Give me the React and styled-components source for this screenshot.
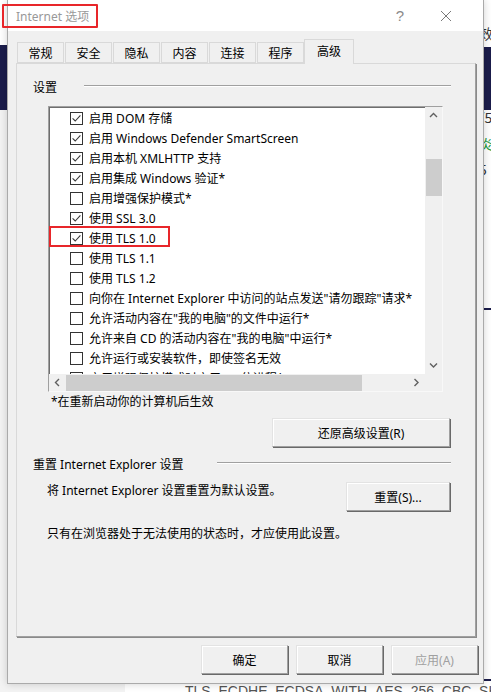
import React from 'react'
import styled, { createGlobalStyle } from 'styled-components'

const GlobalStyle = createGlobalStyle`
  body {
    margin: 0;
    font-family: 'Noto Sans', 'Noto Sans CJK SC', sans-serif;
    font-size: 12px;
    color: #000;
  }
`

const Desktop = styled.div`
  width: 491px;
  height: 692px;
  overflow: hidden;
  display: flex;
  flex-direction: column;
  padding-left: 7px;
  box-sizing: border-box;
  background:
    linear-gradient(#1b1c4b, #1b1c4b) 0 45px / 7px 65px no-repeat,
    linear-gradient(#1b1c4b, #1b1c4b) 484px 47px / 7px 63px no-repeat,
    linear-gradient(#1b1c4b, #1b1c4b) 484px 308px / 7px 2px no-repeat,
    linear-gradient(#1b1c4b, #1b1c4b) 484px 679px / 7px 2px no-repeat,
    linear-gradient(#f3f3f3, #f3f3f3) 0 110px / 125px 100% no-repeat,
    #fff;
`

const Top = styled.div`
  display: flex;
`

const SidePeek = styled.div`
  width: 12px;
  margin-left: -5px;
  display: flex;
  flex-direction: column;
  font-family: 'Noto Sans CJK SC', sans-serif;
  font-size: 14px;
  line-height: 26px;
  color: #333;
  white-space: nowrap;
  padding-top: 20px;
`

const PeekText = styled.div`
  margin-top: ${p => p.$gap || 0}px;
  color: ${p => p.$color || '#333'};
`

const Window = styled.div`
  position: relative;
  z-index: 1;
  width: 477px;
  height: 684px;
  flex-shrink: 0;
  box-sizing: border-box;
  border: 1px solid #aaaaaa;
  border-top: none;
  background: #f0f0f0;
  display: flex;
  flex-direction: column;
  box-shadow: 0 0 8px rgba(0, 0, 0, 0.18);
`

const TitleBar = styled.div`
  position: relative;
  height: 31px;
  background: #fff;
  display: flex;
  align-items: center;
  padding-left: 8px;
  padding-right: 14px;
`

const Title = styled.span`
  flex: 1;
  color: #999;
  font-size: 12px;
`

const Mark = styled.div`
  position: absolute;
  left: -6px;
  top: 4px;
  width: 96px;
  height: 24px;
  border: 2px solid #e8262a;
  box-sizing: border-box;
  border-radius: 1px;
`

const TitleButton = styled.span`
  width: 46px;
  display: flex;
  justify-content: center;
  color: #8a8a8a;
  font-size: 15px;
  font-family: 'Liberation Sans', sans-serif;
`

const Body = styled.div`
  flex: 1;
  display: flex;
  flex-direction: column;
  padding: 9px 7px 9px 8px;
`

const TabRow = styled.div`
  position: relative;
  z-index: 1;
  height: 24px;
  margin-bottom: -1px;
  padding-left: 1px;
  display: flex;
  align-items: flex-end;
`

const Tab = styled.div`
  box-sizing: border-box;
  width: ${p => (p.$active ? 50 : 47)}px;
  height: ${p => (p.$active ? 25 : 21)}px;
  margin: ${p => (p.$active ? '0 0 0 -1px' : '0 1px 1px 0')};
  border: 1px solid #d9d9d9;
  border-bottom: ${p => (p.$active ? 'none' : '1px solid #d9d9d9')};
  background: #f0f0f0;
  display: flex;
  justify-content: center;
  align-items: center;
  padding-bottom: ${p => (p.$active ? 3 : 0)}px;
`

const Panel = styled.div`
  flex: 1;
  display: flex;
  flex-direction: column;
  border: 1px solid #d9d9d9;
  border-right-color: #a0a0a0;
  border-bottom-color: #a0a0a0;
  box-shadow: 1px 1px 0 #8a8a8a;
  padding-top: 14px;
`

const GroupHeader = styled.div`
  height: 18px;
  display: flex;
  align-items: center;
  gap: ${p => p.$gap}px;
  padding: 0 24px 0 16px;
  margin-top: ${p => p.$top || 0}px;
`

const GroupLine = styled.div`
  flex: 1;
  border-top: 1px solid #a0a0a0;
  border-bottom: 1px solid #fff;
  margin-top: -2px;
`

const ListBox = styled.div`
  margin: 10px 32px 0 31px;
  height: 286px;
  box-sizing: border-box;
  border: 1px solid;
  border-color: #a0a0a0 #f8f8f8 #f8f8f8 #a0a0a0;
  box-shadow: inset 1px 1px 0 #6e6e6e;
  background: #fff;
  display: grid;
  grid-template-columns: 1fr 17px;
  grid-template-rows: 1fr 17px;
  overflow: hidden;
`

const ListContent = styled.div`
  overflow: hidden;
  padding-left: 21px;
  padding-top: 1px;
`

const Item = styled.div`
  position: relative;
  height: 20px;
  display: flex;
  align-items: center;
  gap: 6px;
  white-space: nowrap;
`

const ItemMark = styled.div`
  position: absolute;
  left: -21px;
  top: -2px;
  width: 121px;
  height: 21px;
  border: 2px solid #e8262a;
  box-sizing: border-box;
`

const Box = styled.span`
  width: 13px;
  height: 13px;
  box-sizing: border-box;
  border: 1px solid #333;
  background: #fff;
  flex-shrink: 0;
  display: flex;
`

const VScroll = styled.div`
  background: #f0f0f0;
  display: flex;
  flex-direction: column;
`

const HScroll = styled.div`
  background: #f0f0f0;
  display: flex;
`

const Corner = styled.div`
  background: #f0f0f0;
`

const Arrow = styled.div`
  width: 17px;
  height: 17px;
  flex-shrink: 0;
  display: flex;
  align-items: center;
  justify-content: center;
`

const VTrack = styled.div`
  flex: 1;
  padding-top: ${p => p.$offset}px;
  padding-left: 1px;
`

const VThumb = styled.div`
  height: ${p => p.$size}px;
  background: #cdcdcd;
`

const HTrack = styled.div`
  flex: 1;
  padding-top: 1px;
`

const HThumb = styled.div`
  width: ${p => p.$size}px;
  height: 16px;
  background: #cdcdcd;
`

const Note = styled.div`
  margin: 2px 0 0 34px;
  line-height: 16px;
`

const RestoreRow = styled.div`
  display: flex;
  justify-content: flex-end;
  padding-right: 25px;
  margin-top: 8px;
`

const Button = styled.button`
  box-sizing: border-box;
  width: ${p => p.$width}px;
  height: 29px;
  padding: 0;
  font: inherit;
  font-size: 12px;
  color: ${p => (p.disabled ? '#a0a0a0' : '#000')};
  background: #f0f0f0;
  border: 1px solid;
  border-color: #e3e3e3 #a0a0a0 #a0a0a0 #e3e3e3;
  box-shadow: inset 1px 1px 0 #fff, 1px 1px 0 #696969;
  flex-shrink: 0;
`

const ResetRow = styled.div`
  display: flex;
  justify-content: space-between;
  align-items: flex-start;
  padding: 0 25px 0 30px;
  margin-top: 9px;
`

const ResetText = styled.div`
  padding-top: 1px;
  line-height: 16px;
`

const Hint = styled.div`
  margin: 15px 0 0 30px;
  line-height: 16px;
`

const ButtonBar = styled.div`
  display: flex;
  justify-content: flex-end;
  gap: 8px;
  margin: 8px -2px 0 0;
`

const BottomStrip = styled.div`
  height: 8px;
  padding-left: 178px;
  overflow: hidden;
  font-family: 'Liberation Sans', sans-serif;
  font-size: 14px;
  line-height: 14px;
  color: #555;
  white-space: nowrap;
`

const Chevron = ({ dir }) => {
  const paths = {
    up: 'M1 5 L4.5 1.5 L8 5',
    down: 'M1 1.5 L4.5 5 L8 1.5',
    left: 'M5 1 L1.5 4.5 L5 8',
    right: 'M1.5 1 L5 4.5 L1.5 8'
  }
  const vertical = dir === 'up' || dir === 'down'
  return (
    <svg width={vertical ? 9 : 7} height={vertical ? 7 : 9} viewBox={vertical ? '0 0 9 7' : '0 0 7 9'}>
      <path d={paths[dir]} fill='none' stroke='#606060' strokeWidth='1.4' />
    </svg>
  )
}

const Check = ({ on }) => (
  <Box>
    {on && (
      <svg width='11' height='11' viewBox='0 0 11 11'>
        <path d='M1.6 5.4 L4.2 8 L9.4 2.4' fill='none' stroke='#3a3a3a' strokeWidth='1.1' />
      </svg>
    )}
  </Box>
)

const items = [
  { on: true, text: '启用 DOM 存储' },
  { on: true, text: '启用 Windows Defender SmartScreen' },
  { on: true, text: '启用本机 XMLHTTP 支持' },
  { on: true, text: '启用集成 Windows 验证*' },
  { on: false, text: '启用增强保护模式*' },
  { on: true, text: '使用 SSL 3.0' },
  { on: true, text: '使用 TLS 1.0', marked: true },
  { on: false, text: '使用 TLS 1.1' },
  { on: false, text: '使用 TLS 1.2' },
  { on: false, text: '向你在 Internet Explorer 中访问的站点发送"请勿跟踪"请求*' },
  { on: false, text: '允许活动内容在"我的电脑"的文件中运行*' },
  { on: false, text: '允许来自 CD 的活动内容在"我的电脑"中运行*' },
  { on: false, text: '允许运行或安装软件，即使签名无效' },
  { on: false, text: '启用增强保护模式时启用 64 位进程*' }
]

const tabs = ['常规', '安全', '隐私', '内容', '连接', '程序', '高级']

export default function App() {
  return (
    <>
      <GlobalStyle />
      <Desktop>
        <Top>
          <Window>
            <TitleBar>
              <Mark />
              <Title>Internet 选项</Title>
              <TitleButton>?</TitleButton>
              <TitleButton>
                <svg width='12' height='12' viewBox='0 0 12 12'>
                  <path d='M1 1 L11 11 M11 1 L1 11' stroke='#7a7a7a' strokeWidth='1' />
                </svg>
              </TitleButton>
            </TitleBar>
            <Body>
              <TabRow>
                {tabs.map(t => (
                  <Tab key={t} $active={t === '高级'}>{t}</Tab>
                ))}
              </TabRow>
              <Panel>
                <GroupHeader $gap={27}>
                  <span>设置</span>
                  <GroupLine />
                </GroupHeader>
                <ListBox>
                  <ListContent>
                    {items.map(item => (
                      <Item key={item.text}>
                        {item.marked && <ItemMark />}
                        <Check on={item.on} />
                        <span>{item.text}</span>
                      </Item>
                    ))}
                  </ListContent>
                  <VScroll>
                    <Arrow><Chevron dir='up' /></Arrow>
                    <VTrack $offset={35}>
                      <VThumb $size={37} />
                    </VTrack>
                    <Arrow><Chevron dir='down' /></Arrow>
                  </VScroll>
                  <HScroll>
                    <Arrow><Chevron dir='left' /></Arrow>
                    <HTrack>
                      <HThumb $size={296} />
                    </HTrack>
                    <Arrow><Chevron dir='right' /></Arrow>
                  </HScroll>
                  <Corner />
                </ListBox>
                <Note>*在重新启动你的计算机后生效</Note>
                <RestoreRow>
                  <Button $width={178}>还原高级设置(R)</Button>
                </RestoreRow>
                <GroupHeader $gap={33} $top={8}>
                  <span>重置 Internet Explorer 设置</span>
                  <GroupLine />
                </GroupHeader>
                <ResetRow>
                  <ResetText>将 Internet Explorer 设置重置为默认设置。</ResetText>
                  <Button $width={104}>重置(S)...</Button>
                </ResetRow>
                <Hint>只有在浏览器处于无法使用的状态时，才应使用此设置。</Hint>
              </Panel>
              <ButtonBar>
                <Button $width={87}>确定</Button>
                <Button $width={87}>取消</Button>
                <Button $width={87} disabled>应用(A)</Button>
              </ButtonBar>
            </Body>
          </Window>
          <SidePeek>
            <PeekText>效</PeekText>
            <PeekText $gap={58}>/5</PeekText>
            <PeekText $color='#1a9a3a'>炎</PeekText>
            <PeekText>5</PeekText>
          </SidePeek>
        </Top>
        <BottomStrip>TLS_ECDHE_ECDSA_WITH_AES_256_CBC_SHA (0x507</BottomStrip>
      </Desktop>
    </>
  )
}
